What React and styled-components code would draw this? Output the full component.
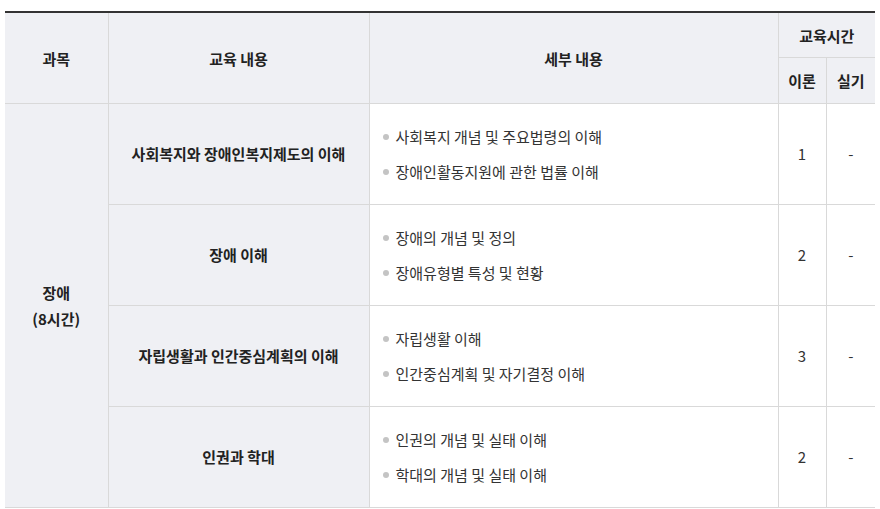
import React from 'react'
import styled, { createGlobalStyle } from 'styled-components'

const GlobalStyle = createGlobalStyle`
  body {
    margin: 0;
    background: #fff;
    font-family: "Noto Sans CJK KR", "Noto Sans", sans-serif;
    color: #222;
  }
`

const Wrap = styled.div`
  padding: 11px 5px 0 5px;
`

const Table = styled.table`
  width: 870px;
  border-collapse: collapse;
  table-layout: fixed;
  border-top: 2px solid #333;
  font-size: 15px;
`

const Th = styled.th`
  background: #eff0f4;
  border: 1px solid #d9d9d9;
  font-weight: 700;
  color: #222;
  height: ${p => p.$h || 44}px;
  padding: 0;
  text-align: center;
  vertical-align: middle;

  &:first-child { border-left: none; }
  &:last-child { border-right: none; }
`

const Td = styled.td`
  background: ${p => (p.$shade ? '#eff0f4' : '#fff')};
  border: 1px solid #d9d9d9;
  font-weight: ${p => (p.$bold ? 700 : 400)};
  text-align: ${p => (p.$left ? 'left' : 'center')};
  vertical-align: middle;
  height: 100px;
  padding: ${p => (p.$left ? '0 0 0 13px' : '0')};
  line-height: 1.7;
  color: ${p => (p.$bold ? '#222' : '#333')};

  &:first-child { border-left: none; }
  &:last-child { border-right: none; }
`

const List = styled.ul`
  list-style: none;
  margin: 0;
  padding: 0;
  display: flex;
  flex-direction: column;
  gap: 13px;
`

const Item = styled.li`
  display: flex;
  align-items: center;
  line-height: 22px;

  &::before {
    content: '';
    width: 6px;
    height: 6px;
    border-radius: 50%;
    background: #c4c4c4;
    margin-right: 7px;
    flex-shrink: 0;
  }
`

const rows = [
  {
    title: '사회복지와 장애인복지제도의 이해',
    items: ['사회복지 개념 및 주요법령의 이해', '장애인활동지원에 관한 법률 이해'],
    theory: '1',
  },
  {
    title: '장애 이해',
    items: ['장애의 개념 및 정의', '장애유형별 특성 및 현황'],
    theory: '2',
  },
  {
    title: '자립생활과 인간중심계획의 이해',
    items: ['자립생활 이해', '인간중심계획 및 자기결정 이해'],
    theory: '3',
  },
  {
    title: '인권과 학대',
    items: ['인권의 개념 및 실태 이해', '학대의 개념 및 실태 이해'],
    theory: '2',
  },
]

const App = () => {
  return (
    <Wrap>
      <GlobalStyle />
      <Table>
        <colgroup>
          <col style={{ width: 103 }} />
          <col style={{ width: 261 }} />
          <col style={{ width: 409 }} />
          <col style={{ width: 48 }} />
          <col style={{ width: 49 }} />
        </colgroup>
        <thead>
          <tr>
            <Th rowSpan={2}>과목</Th>
            <Th rowSpan={2}>교육 내용</Th>
            <Th rowSpan={2}>세부 내용</Th>
            <Th colSpan={2} $h={44}>교육시간</Th>
          </tr>
          <tr>
            <Th $h={45}>이론</Th>
            <Th $h={45}>실기</Th>
          </tr>
        </thead>
        <tbody>
          {rows.map((r, i) => (
            <tr key={r.title}>
              {i === 0 && (
                <Td rowSpan={rows.length} $shade $bold>
                  장애
                  <br />
                  (8시간)
                </Td>
              )}
              <Td $shade $bold>{r.title}</Td>
              <Td $left>
                <List>
                  {r.items.map(t => (
                    <Item key={t}>{t}</Item>
                  ))}
                </List>
              </Td>
              <Td>{r.theory}</Td>
              <Td>-</Td>
            </tr>
          ))}
        </tbody>
      </Table>
    </Wrap>
  )
}

export default App
